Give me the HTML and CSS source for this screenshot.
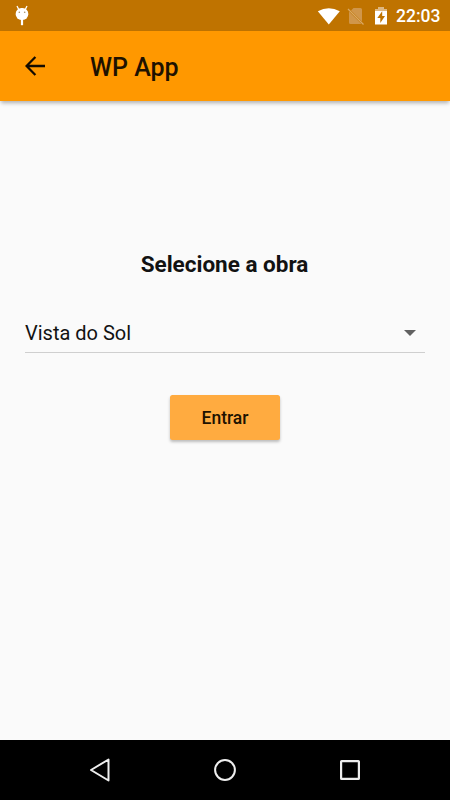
FILE: index.html
```html
<!DOCTYPE html>
<html lang="pt-BR">
<head>
<meta charset="utf-8">
<title>WP App</title>
<link rel="stylesheet" href="styles.css">
</head>
<body>
<div class="screen">
  <div class="status">
    <svg class="debug" width="14" height="22" viewBox="0 0 14 22">
      <path d="M2 1l2 4M12 1l-2 4" stroke="#fff" stroke-width="1.3"/>
      <rect x=".7" y="3" width="12.6" height="12" rx="5.7" fill="#fff"/>
      <path d="M5.900 14h2.200v6.200H5.900z" fill="#fff"/>
      <circle cx="4.300" cy="7.200" r=".8" fill="#a88c60"/><circle cx="9.700" cy="7.200" r=".8" fill="#a88c60"/>
    </svg>
    <svg class="wifi" width="24" height="20" viewBox="0 0 24 20"><path d="M.8 5.200Q11.800-.7 22.800 5.200L11.800 18.600z" fill="#fff"/></svg>
    <svg class="sim" width="20" height="20" viewBox="0 0 20 20">
      <path d="M7.500 2H14.500Q16 2 16 3.500V15.500L5 4.500zM3 5.500L15.500 18H4.500Q3 18 3 16.500z" fill="#d0964a"/>
      <path d="M2 3L17.500 18.500" stroke="#d9a863" stroke-width="1.300"/>
    </svg>
    <svg class="battery" width="14" height="20" viewBox="0 0 14 20">
      <path d="M4 1h6v2h3v4H1V3h3z" fill="#deb780"/>
      <path d="M1 5h12v13.500H1z" fill="#fff"/>
      <path d="M8.200 5.300L3.300 12h3v5l4.700-7H8.200z" fill="#bf7300"/>
    </svg>
    <span class="clock">22:03</span>
  </div>
  <header class="bar">
    <svg class="back" width="20" height="20" viewBox="0 0 20 20"><path d="M20 10H2M10.400 1L1.500 10L10.400 19" fill="none" stroke="#140c00" stroke-width="2.300"/></svg>
    <h1 class="title">WP App</h1>
  </header>
  <main class="content">
    <h2 class="heading">Selecione a obra</h2>
    <div class="select">
      <span class="value">Vista do Sol</span>
      <svg class="caret" width="12" height="6" viewBox="0 0 12 6"><path d="M0 0h12L6 6z" fill="#616161"/></svg>
    </div>
    <button class="enter">Entrar</button>
  </main>
  <nav class="nav">
    <svg width="24" height="26" viewBox="0 0 24 26"><path d="M20.500 2.500V23.500L3 13z" fill="none" stroke="#eee" stroke-width="2" stroke-linejoin="round"/></svg>
    <svg width="24" height="24" viewBox="0 0 24 24"><circle cx="12" cy="12" r="9.900" fill="none" stroke="#eee" stroke-width="2"/></svg>
    <svg width="24" height="24" viewBox="0 0 24 24"><rect x="3.100" y="3.100" width="17.800" height="17.800" rx=".5" fill="none" stroke="#eee" stroke-width="2.200"/></svg>
  </nav>
</div>
</body>
</html>
```
FILE: styles.css
```css
* { box-sizing: border-box; }
body { margin: 0; font-family: Roboto, sans-serif; color: #121212; }
.screen { width: 450px; height: 800px; display: flex; flex-direction: column; background: #fafafa; overflow: hidden; }
.status { height: 31px; flex: none; background: #bf7300; display: flex; align-items: flex-start; padding: 6px 10px 0 15px; }
.debug { margin-right: auto; margin-top: -1px; }
.wifi { margin-right: 5px; }
.sim { margin-right: 8px; }
.battery { margin-right: 8px; }
.clock { width: 44px; font-size: 17.5px; font-weight: 500; line-height: 21px; color: #fff; white-space: nowrap; }
.bar { height: 70px; flex: none; background: #ff9800; display: flex; align-items: center; padding-left: 25px; box-shadow: 0 3px 4px -1px rgba(0, 0, 0, .3); }
.back { margin-right: 45px; }
.title { margin: 3px 0 0; font-size: 25px; font-weight: 500; line-height: 31px; color: #1e1200; }
.content { flex: 1; display: flex; flex-direction: column; align-items: center; padding: 148px 25px 0; }
.heading { margin: 0; padding-right: 1px; font-size: 22.5px; font-weight: 700; line-height: 30px; white-space: nowrap; }
.select { width: 400px; height: 41px; margin-top: 33px; padding: 2px 9px 0 0; border-bottom: 1px solid #cfcfcf; display: flex; align-items: center; justify-content: space-between; }
.value { font-size: 20px; line-height: 24px; }
.enter { width: 110px; height: 45px; margin-top: 42px; padding: 1px 0 0; border: 0; border-radius: 2.5px; background: #ffab40; color: #1e1200; font: 500 17.5px/24px Roboto, sans-serif; box-shadow: 0 2px 3px rgba(0, 0, 0, .25); }
.nav { height: 60px; flex: none; background: #000; display: flex; align-items: center; justify-content: space-between; padding: 0 88px; }
```
